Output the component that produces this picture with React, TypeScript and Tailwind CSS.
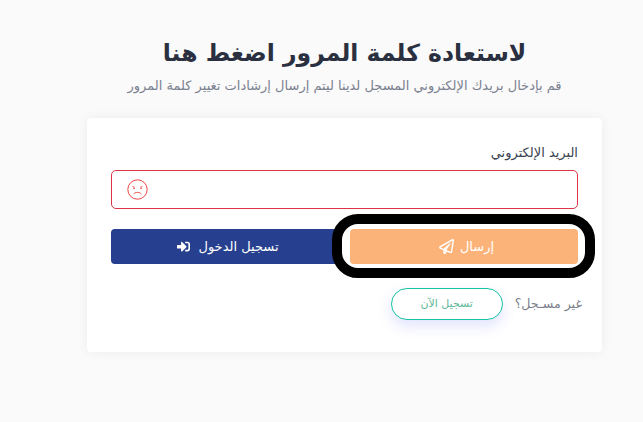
import { FaRegPaperPlane, FaSignInAlt } from "react-icons/fa";

const FONT = "font-['DejaVu_Sans',sans-serif]";

function SadFace() {
  return (
    <svg width="21" height="21" viewBox="0 0 21 21" fill="none" stroke="#ef4444" strokeWidth="1">
      <circle cx="10.5" cy="10.5" r="9.7" />
      <path d="M5.6 7.6 L7.6 8.2 M15.4 7.6 L13.4 8.2" />
      <circle cx="7" cy="9.4" r="0.4" />
      <circle cx="14" cy="9.4" r="0.4" />
      <path d="M6.6 15 C8.2 12.9 12.8 12.9 14.4 15" />
    </svg>
  );
}

export default function App() {
  return (
    <div dir="rtl" className={`min-h-[422px] overflow-hidden bg-[#fafafa] ${FONT}`}>
      <div className="ml-[87px] mr-[41px] flex flex-col items-center pt-[37px]">
        <h1 className="h-[33px] whitespace-nowrap text-[23.5px] leading-[33px] font-semibold text-[#2b3040]">
          لاستعادة كلمة المرور اضغط هنا
        </h1>
        <p className="mt-[6px] h-[20px] whitespace-nowrap text-[13px] leading-[20px] text-[#7b8190]">
          قم بإدخال بريدك الإلكتروني المسجل لدينا ليتم إرسال إرشادات تغيير كلمة المرور
        </p>
      </div>

      <div className="mr-[41px] mt-[22px] h-[234px] w-[515px] rounded-[4px] bg-white px-[24px] pt-[24px] shadow-[0_0_12px_rgba(0,0,0,0.06)]">
        <label className="block h-[28px] text-[13px] leading-[22px] text-[#3a3f50]">البريد الإلكتروني</label>
        <div className="flex h-[39px] items-center rounded-[5px] border border-[#dc3545] pl-[15px]">
          <div className="mr-auto">
            <SadFace />
          </div>
        </div>

        <div className="mt-[20px] flex gap-[5px]">
          <div className="relative z-10 w-[228px]">
            <button className="flex h-[35px] w-full items-center justify-center gap-[6px] rounded-[4px] bg-[#fbb37a] pl-[5px] text-[13px] text-white shadow-[0_0_0_8px_#fff]">
              <span>إرسال</span>
              <FaRegPaperPlane className="text-[15px]" />
            </button>
            {/* marker drawn around the send button */}
            <div className="absolute -left-[18px] -right-[17px] -top-[15px] -bottom-[14px] rounded-[26px] border-[10px] border-black" />
          </div>
          <button className="flex h-[35px] w-[234px] items-center justify-center gap-[8px] rounded-[4px] bg-[#263f8e] text-[13px] text-white">
            <span>تسجيل الدخول</span>
            <FaSignInAlt className="text-[13px]" />
          </button>
        </div>

        <div className="mt-[24px] flex items-center">
          <span className="-mr-[4px] text-[12.6px] text-[#7b7f8c]">غير مسـجل؟</span>
          <button className="mr-[12px] h-[32px] w-[112px] rounded-full border border-[#17c3a2] bg-white text-[11px] text-[#5fb89a] shadow-[0_6px_14px_rgba(90,100,240,0.18)]">
            تسجيل الآن
          </button>
        </div>
      </div>
    </div>
  );
}
